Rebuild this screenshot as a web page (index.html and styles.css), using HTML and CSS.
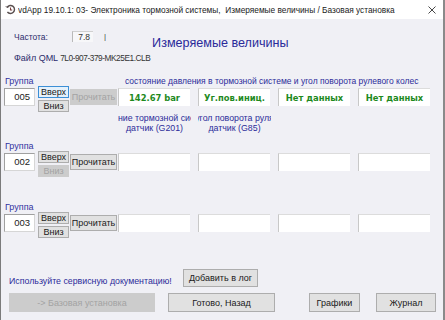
FILE: index.html
```html
<!DOCTYPE html>
<html lang="ru">
<head>
<meta charset="utf-8">
<title>vdApp</title>
<link rel="stylesheet" href="styles.css">
</head>
<body>
<div class="window">
  <div class="titlebar">
    <svg class="app-icon" width="11" height="11" viewBox="0 0 11 11">
      <path d="M2.2 3.2 A4 4 0 1 1 2.4 8" fill="none" stroke="#5a5050" stroke-width="1.4"/>
      <path d="M5.5 3.5 L5.5 6 L7.2 6" fill="none" stroke="#7a4040" stroke-width="1.1"/>
      <path d="M0.8 2.2 L2.6 4 L3.6 1.8" fill="none" stroke="#5a5050" stroke-width="1"/>
    </svg>
    <span class="title-text">vdApp 19.10.1: 03- Электроника тормозной системы,&nbsp; Измеряемые величины / Базовая установка</span>
    <svg class="close" width="8" height="8" viewBox="0 0 8 8">
      <path d="M0.5 0.5 L7.5 7.5 M7.5 0.5 L0.5 7.5" stroke="#333" stroke-width="0.9"/>
    </svg>
  </div>
  <div class="content">
    <div class="top-row">
      <span class="freq-label">Частота:</span>
      <span class="freq-box">7.8</span>
      <span class="freq-bar">|</span>
      <h1 class="heading">Измеряемые величины</h1>
    </div>
    <div class="file-row"><span class="file-label">Файл QML</span><span class="file-name">7L0-907-379-MK25E1.CLB</span></div>

    <div class="group g1">
      <div class="group-head"><span class="group-label">Группа</span><span class="caption">состояние давления в тормозной системе и угол поворота рулевого колес</span></div>
      <div class="grow">
        <span class="gnum">005</span>
        <div class="updown">
          <button class="btn small focus">Вверх</button>
          <button class="btn small">Вниз</button>
        </div>
        <button class="btn read disabled">Прочитать</button>
        <div class="cells">
          <div class="cell val">142.67 bar</div>
          <div class="cell val">Уг.пов.иниц.</div>
          <div class="cell val">Нет данных</div>
          <div class="cell val">Нет данных</div>
        </div>
      </div>
      <div class="descs">
        <div class="desc"><span>давление тормозной системы</span><span>датчик (G201)</span></div>
        <div class="desc"><span>угол поворота руля</span><span>датчик (G85)</span></div>
      </div>
    </div>

    <div class="group g2">
      <div class="group-head"><span class="group-label">Группа</span></div>
      <div class="grow">
        <span class="gnum">002</span>
        <div class="updown">
          <button class="btn small">Вверх</button>
          <button class="btn small disabled">Вниз</button>
        </div>
        <button class="btn read">Прочитать</button>
        <div class="cells">
          <div class="cell"></div><div class="cell"></div><div class="cell"></div><div class="cell"></div>
        </div>
      </div>
    </div>

    <div class="group g3">
      <div class="group-head"><span class="group-label">Группа</span></div>
      <div class="grow">
        <span class="gnum">003</span>
        <div class="updown">
          <button class="btn small">Вверх</button>
          <button class="btn small">Вниз</button>
        </div>
        <button class="btn read">Прочитать</button>
        <div class="cells">
          <div class="cell"></div><div class="cell"></div><div class="cell"></div><div class="cell"></div>
        </div>
      </div>
    </div>

    <div class="note-row">
      <span class="note">Используйте сервисную документацию!</span>
      <button class="btn log">Добавить в лог</button>
    </div>
    <div class="bottom-row">
      <button class="btn big disabled basic">-&gt; Базовая установка</button>
      <button class="btn big done">Готово, Назад</button>
      <button class="btn big charts">Графики</button>
      <button class="btn big journal">Журнал</button>
    </div>
  </div>
</div>
</body>
</html>
```
FILE: styles.css
```css
html, body {
  margin: 0;
  padding: 0;
  background: #8a8a8a;
}
body {
  width: 445px;
  height: 320px;
  overflow: hidden;
  font-family: "Liberation Sans", Arial, sans-serif;
}
.window {
  width: 442px;
  height: 320px;
  background: #f0f0f5;
  border-left: 1px solid #7b7b7b;
  display: flex;
  flex-direction: column;
}
.titlebar {
  height: 19px;
  background: #ffffff;
  display: flex;
  align-items: center;
  padding-left: 4px;
  flex-shrink: 0;
}
.app-icon { flex-shrink: 0; }
.title-text {
  margin-left: 2px;
  font-family: "Liberation Sans", Arial, sans-serif;
  font-size: 8.3px;
  color: #1a1a1a;
  white-space: nowrap;
  overflow: hidden;
  min-width: 0;
}
.close {
  margin-left: auto;
  margin-right: 7px;
  flex-shrink: 0;
}
.content {
  display: flex;
  flex-direction: column;
  padding-left: 3px;
}
.top-row {
  display: flex;
  align-items: flex-start;
  margin-top: 12px;
  padding-left: 10px;
  height: 21px;
}
.freq-label {
  width: 58px;
  font-size: 8.5px;
  line-height: 11px;
  color: #2c2c6c;
  margin-top: 1px;
}
.freq-box {
  width: 17px;
  height: 10px;
  background: #f7f7f9;
  border-left: 1px solid #b9b9b9;
  border-top: 1px solid #d0d0d0;
  font-size: 8.5px;
  line-height: 10px;
  text-align: right;
  padding-right: 3px;
  box-sizing: content-box;
  color: #333;
}
.freq-bar {
  margin-left: 11px;
  font-size: 8px;
  line-height: 11px;
  color: #444;
}
.heading {
  margin: 5px 0 0 46px;
  font-size: 12.6px;
  line-height: 15px;
  font-weight: normal;
  color: #2a2a9a;
}
.file-row {
  padding-left: 10px;
  height: 11px;
  display: flex;
  align-items: baseline;
  line-height: 11px;
  margin-top: 1px;
}
.file-label {
  font-size: 9px;
  color: #2c2c6c;
}
.file-name {
  font-size: 8.3px;
  letter-spacing: -0.45px;
  color: #333;
  margin-left: 2px;
}
.group { display: flex; flex-direction: column; }
.g1 { margin-top: 12px; }
.g2 { margin-top: 8px; }
.g3 { margin-top: 24px; }
.group-head {
  display: flex;
  height: 10px;
  line-height: 10px;
  font-size: 9px;
}
.group-label {
  width: 120px;
  color: #3333a0;
  padding-left: 1px;
}
.caption {
  color: #2c2c9a;
  font-size: 8.5px;
  white-space: nowrap;
}
.grow {
  display: flex;
  align-items: flex-start;
  height: 27px;
}
.gnum {
  margin-top: 2px;
  background: #fff;
  border: 1px solid #8c8c8c;
  border-color: #a0a0a0 #d6d6d6 #d6d6d6 #a0a0a0;
  font-size: 9.5px;
  line-height: 16px;
  text-align: right;
  padding-right: 4px;
  box-sizing: border-box;
  width: 31px;
  height: 18px;
  color: #222;
}
.updown {
  display: flex;
  flex-direction: column;
  gap: 2px;
  margin-left: 3px;
}
.btn {
  font-family: "Liberation Sans", Arial, sans-serif;
  background: #e1e1e1;
  border: 1px solid #adadad;
  color: #1a1a1a;
  padding: 0;
  margin: 0;
  box-sizing: border-box;
  font-size: 9px;
  white-space: nowrap;
}
.btn.small {
  width: 31px;
  height: 12px;
  line-height: 10px;
}
.btn.focus {
  background: #e5f1fb;
  border-color: #3c8fd6;
}
.btn.disabled {
  background: #cccccc;
  border-color: #cccccc;
  color: #a3a3a3;
}
.btn.read {
  margin-left: 1px;
  margin-top: 3px;
  width: 47px;
  height: 16px;
}
.cells {
  display: flex;
  gap: 8px;
  margin-left: 1px;
  margin-top: 2px;
}
.cell {
  width: 72px;
  height: 18px;
  background: #ffffff;
  border-left: 1px solid #c8c8c8;
  border-top: 1px solid #dcdcdc;
  box-sizing: border-box;
}
.cell.val {
  font-family: "DejaVu Sans", sans-serif;
  font-weight: bold;
  font-size: 8.4px;
  color: #1e8a1e;
  display: flex;
  align-items: center;
  justify-content: center;
  white-space: nowrap;
  overflow: hidden;
}
.descs {
  display: flex;
  gap: 7px;
  margin-left: 114px;
  height: 20px;
}
.desc {
  width: 73px;
  overflow: hidden;
  display: flex;
  flex-direction: column;
  align-items: center;
  font-size: 8.8px;
  line-height: 10px;
  color: #2c2c9a;
  white-space: nowrap;
}
.desc span {
  width: max-content;
  flex-shrink: 0;
}
.note-row {
  margin-top: 30px;
  display: flex;
  align-items: flex-end;
  height: 18px;
}
.note {
  font-size: 8.8px;
  color: #2c2c9a;
  margin-left: 5px;
  line-height: 11px;
  width: 174px;
  white-space: nowrap;
}
.btn.log {
  height: 18px;
  width: 75px;
}
.bottom-row {
  display: flex;
  margin-top: 6px;
  margin-left: 5px;
}
.btn.big {
  height: 19px;
}
.basic { width: 146px; }
.done { width: 107px; margin-left: 13px; }
.charts { width: 51px; margin-left: 34px; }
.journal { width: 60px; margin-left: 16px; }
```
